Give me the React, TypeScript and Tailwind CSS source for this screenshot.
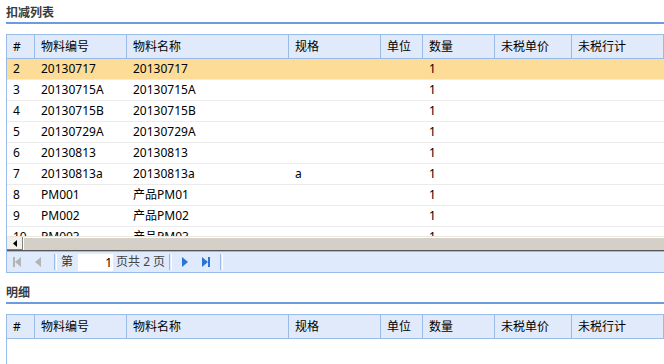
import React from "react";

type Row = {
  no: number;
  code: string;
  name: string;
  spec?: string;
  qty: string;
};

const rows: Row[] = [
  { no: 2, code: "20130717", name: "20130717", qty: "1" },
  { no: 3, code: "20130715A", name: "20130715A", qty: "1" },
  { no: 4, code: "20130715B", name: "20130715B", qty: "1" },
  { no: 5, code: "20130729A", name: "20130729A", qty: "1" },
  { no: 6, code: "20130813", name: "20130813", qty: "1" },
  { no: 7, code: "20130813a", name: "20130813a", spec: "a", qty: "1" },
  { no: 8, code: "PM001", name: "产品PM01", qty: "1" },
  { no: 9, code: "PM002", name: "产品PM02", qty: "1" },
  { no: 10, code: "PM003", name: "产品PM03", qty: "1" },
];

const columns = [
  { label: "#", width: "w-[28px]" },
  { label: "物料编号", width: "w-[92px]" },
  { label: "物料名称", width: "w-[162px]" },
  { label: "规格", width: "w-[92px]" },
  { label: "单位", width: "w-[42px]" },
  { label: "数量", width: "w-[72px]" },
  { label: "未税单价", width: "w-[77px]" },
  { label: "未税行计", width: "w-[92px]" },
];

const SectionTitle = ({ title }: { title: string }) => (
  <div className="border-b-2 border-[#6d9be0] pb-[1px]">
    <div className="h-[16px] text-[12px] font-bold leading-[16px] text-[#3a3a3a]">{title}</div>
  </div>
);

const GridHeader = () => (
  <div className="flex h-[24px] border-b border-[#99bbe8] bg-[#e0eafa]">
    {columns.map((col) => (
      <div
        key={col.label}
        className={`${col.width} shrink-0 border-r border-[#99bbe8] pl-[6px] text-[12px] leading-[23px] text-black`}
      >
        {col.label}
      </div>
    ))}
  </div>
);

const PagerSep = () => <div className="h-[16px] w-[2px] border-l border-[#99bbe8] shadow-[1px_0_0_#fff]" />;

const Tri = ({ dir, color }: { dir: "l" | "r"; color: string }) => (
  <svg width="6" height="10" viewBox="0 0 6 10">
    {dir === "l" ? <path d="M6 0 L0 5 L6 10 Z" fill={color} /> : <path d="M0 0 L6 5 L0 10 Z" fill={color} />}
  </svg>
);

const App = () => {
  return (
    <div
      className="h-[364px] w-[664px] overflow-hidden bg-white pl-[6px] pt-[5px]"
      style={{ fontFamily: '"Noto Sans", "Noto Sans CJK SC", sans-serif' }}
    >
      <SectionTitle title="扣减列表" />

      <div className="mt-[10px] border-l border-t border-[#99bbe8]">
        <GridHeader />
        <div className="h-[177px] overflow-hidden">
          {rows.map((row) => (
            <div
              key={row.no}
              className={`flex h-[21px] border-b border-[#ebebeb] text-[12px] leading-[20px] text-black ${
                row.no === 2 ? "bg-[#fddc98]" : "bg-white"
              }`}
            >
              <div className="w-[28px] shrink-0 pl-[6px]">{row.no}</div>
              <div className="w-[92px] shrink-0 pl-[6px]">{row.code}</div>
              <div className="w-[162px] shrink-0 pl-[6px]">{row.name}</div>
              <div className="w-[92px] shrink-0 pl-[6px]">{row.spec ?? ""}</div>
              <div className="w-[42px] shrink-0 pl-[6px]"></div>
              <div className="w-[72px] shrink-0 pl-[6px]">{row.qty}</div>
              <div className="w-[77px] shrink-0 pl-[6px]"></div>
              <div className="w-[92px] shrink-0 pl-[6px]"></div>
            </div>
          ))}
        </div>

        {/* horizontal scrollbar */}
        <div className="flex h-[14px] border-t border-[#e8e6df]">
          <div className="flex w-[16px] shrink-0 items-center justify-center border-b border-r border-[#808080] bg-[#f1f0ea]">
            <svg width="4" height="7" viewBox="0 0 4 7">
              <path d="M4 0 L0 3.5 L4 7 Z" fill="#000" />
            </svg>
          </div>
          <div className="flex-1 border-l border-t border-white bg-[#d4d0c8]" />
        </div>
        <div className="h-[1px] bg-[#555]" />

        {/* pager */}
        <div className="flex h-[22px] items-center border-b border-t border-[#99bbe8] bg-[#dfeafc] text-[12px] text-[#333]">
          <div className="ml-[6px] flex items-center">
            <div className="h-[10px] w-[2px] bg-[#b4b4b4]" />
            <Tri dir="l" color="#b4b4b4" />
          </div>
          <div className="ml-[14px]">
            <Tri dir="l" color="#b4b4b4" />
          </div>
          <div className="ml-[13px]">
            <PagerSep />
          </div>
          <span className="ml-[5px]">第</span>
          <div className="ml-[4px] h-[19px] w-[37px] border border-[#e6eaf2] bg-white pr-[1px] text-right leading-[17px] text-black">
            1
          </div>
          <span className="ml-[2px] text-[#444]">页共 2 页</span>
          <div className="ml-[4px]">
            <PagerSep />
          </div>
          <div className="ml-[11px]">
            <Tri dir="r" color="#2a74d4" />
          </div>
          <div className="ml-[14px] flex items-center">
            <Tri dir="r" color="#2a74d4" />
            <div className="h-[10px] w-[2px] bg-[#2a74d4]" />
          </div>
          <div className="ml-[10px]">
            <PagerSep />
          </div>
        </div>
      </div>

      <div className="mt-[12px]">
        <SectionTitle title="明细" />
      </div>

      <div className="mt-[10px] h-[60px] border-l border-t border-[#99bbe8]">
        <GridHeader />
      </div>
    </div>
  );
};

export default App;
